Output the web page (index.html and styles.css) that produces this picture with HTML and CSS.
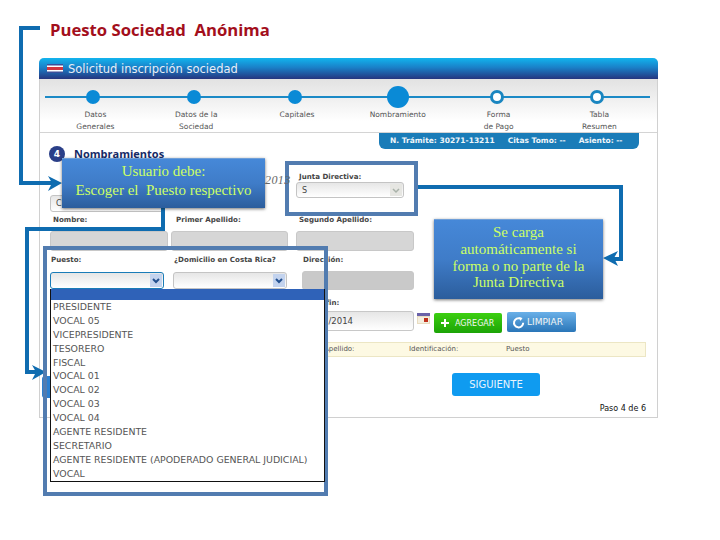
FILE: index.html
```html
<!DOCTYPE html>
<html lang="es">
<head>
<meta charset="utf-8">
<title>Puesto Sociedad Anónima</title>
<link rel="stylesheet" href="styles.css">
</head>
<body>
<main class="stage">
  <h1 class="slide-title">Puesto Sociedad&nbsp; Anónima</h1>
  <section class="card">
    <header class="card-head">
      <svg class="flag" width="16" height="9" viewBox="0 0 16 9"><rect width="16" height="9" fill="#fff"/><rect width="16" height="1.5" fill="#3b4f9a"/><rect y="3" width="16" height="3" fill="#d2353f"/><rect y="7.5" width="16" height="1.5" fill="#3b4f9a"/></svg>
      <span>Solicitud inscripción sociedad</span>
    </header>
    <div class="stepper">
      <div class="step"><i class="dot"></i><span>Datos<br>Generales</span></div>
      <div class="step"><i class="dot"></i><span>Datos de la<br>Sociedad</span></div>
      <div class="step"><i class="dot"></i><span>Capitales</span></div>
      <div class="step"><i class="dot current"></i><span>Nombramiento</span></div>
      <div class="step"><i class="dot todo"></i><span>Forma<br>de Pago</span></div>
      <div class="step"><i class="dot todo"></i><span>Tabla<br>Resumen</span></div>
    </div>
    <div class="tramite"><span>N. Trámite: 30271-13211</span><span>Citas Tomo: --</span><span>Asiento: --</span></div>
    <div class="section-head"><b class="num">4</b><h2>Nombramientos</h2></div>
    <div class="form">
      <div class="cell row-a"><div class="select plain"><span>C</span></div></div>
      <div class="cell row-a"><span class="date-text">2013</span></div>
      <div class="cell row-a cell-junta"><label>Junta Directiva:</label><div class="select plain junta"><span>S</span><i class="arrow"><svg width="10" height="7" viewBox="0 0 10 7"><path d="M2 2l3 3 3-3" fill="none" stroke="#a9b2a9" stroke-width="1.5"/></svg></i></div></div>
      <div class="cell row-a"></div>

      <div class="cell row-b"><label>Nombre:</label><div class="field"></div></div>
      <div class="cell row-b"><label>Primer Apellido:</label><div class="field mid"></div></div>
      <div class="cell row-b"><label>Segundo Apellido:</label><div class="field"></div></div>
      <div class="cell row-b"></div>

      <div class="cell row-c"><label class="flush">Puesto:</label><div class="select active"><i class="arrow blue"><svg width="10" height="7" viewBox="0 0 10 7"><path d="M2 2l3 3 3-3" fill="none" stroke="#23508f" stroke-width="2"/></svg></i></div></div>
      <div class="cell row-c"><label class="flush">¿Domicilio en Costa Rica?</label><div class="select"><i class="arrow blue"><svg width="10" height="7" viewBox="0 0 10 7"><path d="M2 2l3 3 3-3" fill="none" stroke="#23508f" stroke-width="2"/></svg></i></div></div>
      <div class="cell row-c cell-dir"><label class="flush">Dirección:</label><div class="field dark"></div></div>
      <div class="cell row-c"></div>

      <div class="cell row-d"></div>
      <div class="cell row-d"></div>
      <div class="cell row-d cell-date">
        <label>Fecha fin:</label>
        <div class="date-input">01/01/2014</div>
        <svg class="cal" width="13" height="11" viewBox="0 0 13 11"><rect width="13" height="11" fill="#e8dcc0"/><rect width="13" height="3" fill="#6a62a8"/><rect x="1" y="4" width="11" height="6" fill="#f4efe0"/><rect x="7" y="5" width="4" height="4" fill="#c0301c"/></svg>
      </div>
      <div class="cell row-d actions">
        <div class="btn green"><svg width="10" height="10" viewBox="0 0 10 10"><path d="M5 1v8M1 5h8" stroke="#fff" stroke-width="2"/></svg><span>AGREGAR</span></div>
        <div class="btn azure"><svg width="13" height="13" viewBox="0 0 13 13"><path d="M8.5 2.6a4.6 4.6 0 1 0 2.7 4.2" fill="none" stroke="#fff" stroke-width="2"/><path d="M7 1l3.5 1-2 3z" fill="#fff"/></svg><span>LIMPIAR</span></div>
      </div>
    </div>
    <div class="table-head"><span class="th-c">Segundo Apellido:</span><span class="th-d">Identificación:</span><span class="th-e">Puesto</span></div>
    <div class="next-row"><div class="next">SIGUIENTE</div></div>
    <p class="pager">Paso 4 de 6</p>
  </section>

  <svg class="wires" width="720" height="540" viewBox="0 0 720 540">
    <g fill="none" stroke="#0f6cb0" stroke-width="4">
      <path d="M40 28H21V183H54"/>
      <path d="M163 208V229H27V372H38"/>
      <path d="M418 187H621V259H612"/>
    </g>
    <g fill="#0f6cb0">
      <path d="M48 176L62 183 48 191 52 183z"/>
      <path d="M32 365L46 372 32 380 36 372z"/>
      <path d="M618 251L603 258 618 266 614 258z"/>
    </g>
  </svg>

  <div class="frame frame-junta"></div>
  <i class="tab"></i>
  <div class="frame frame-puesto"></div>
  <ul class="dropdown">
    <li class="selected">&nbsp;</li>
    <li>PRESIDENTE</li>
    <li>VOCAL 05</li>
    <li>VICEPRESIDENTE</li>
    <li>TESORERO</li>
    <li>FISCAL</li>
    <li>VOCAL 01</li>
    <li>VOCAL 02</li>
    <li>VOCAL 03</li>
    <li>VOCAL 04</li>
    <li>AGENTE RESIDENTE</li>
    <li>SECRETARIO</li>
    <li>AGENTE RESIDENTE (APODERADO GENERAL JUDICIAL)</li>
    <li>VOCAL</li>
  </ul>

  <aside class="note note-user"><p>Usuario debe:</p><p>Escoger el&nbsp; Puesto respectivo</p></aside>
  <aside class="note note-auto"><p>Se carga automáticamente si forma o no parte de la Junta Directiva</p></aside>
</main>
</body>
</html>
```

FILE: styles.css
```css
* { box-sizing: border-box; }
html, body { margin: 0; padding: 0; background: #fff; }
.stage {
  position: relative;
  width: 720px;
  height: 540px;
  overflow: hidden;
  padding: 20px 0 0 39px;
  font-family: "DejaVu Sans", sans-serif;
}
.slide-title {
  margin: 0 0 0 11px;
  height: 38px;
  font: bold 16.7px/20px "Open Sans", sans-serif;
  color: #a30f1c;
}
.card {
  width: 619px;
  height: 360px;
  border: 1px solid #d0d0d0;
  border-top: 0;
  border-radius: 5px 5px 0 0;
  background: #fff;
}
.card-head {
  display: flex;
  align-items: center;
  gap: 5px;
  height: 21px;
  margin: 0 -1px;
  padding-left: 8px;
  border-radius: 5px 5px 0 0;
  background: linear-gradient(#12b4ee, #1a80c8 45%, #25357f);
  color: #e8eef6;
  font-size: 11.5px;
}
.flag { display: block; }
.stepper {
  position: relative;
  display: grid;
  grid-template-columns: repeat(6, 100.8px);
  height: 54px;
  padding: 0 0 0 3px;
  overflow: hidden;
  background: linear-gradient(#e2e2e2, #fff 80%);
  border-bottom: 1px solid #d4d4d4;
}
.stepper::before {
  content: "";
  position: absolute;
  left: 5px;
  right: 7px;
  top: 17px;
  height: 2px;
  background: #1c8ac6;
}
.step {
  position: relative;
  display: flex;
  flex-direction: column;
  align-items: center;
  font-size: 7.5px;
  line-height: 11.5px;
  color: #555;
  text-align: center;
  padding-top: 11px;
}
.step span { margin: 5px 0 0 4px; }
.dot {
  display: block;
  width: 14px;
  height: 14px;
  border-radius: 50%;
  background: #0a8ad6;
}
.dot.current {
  width: 22px;
  height: 22px;
  margin: -4px 0 -4px 4px;
}
.dot.todo {
  background: #fff;
  border: 3px solid #1a86c0;
}
.tramite {
  display: flex;
  gap: 13px;
  width: 260px;
  height: 16px;
  margin-left: 339px;
  padding-left: 11px;
  border-radius: 0 0 6px 6px;
  background: #1a7cb8;
  color: #f0f6fa;
  font-size: 7.5px;
  font-weight: bold;
  line-height: 16px;
  white-space: nowrap;
}
.section-head {
  display: flex;
  align-items: flex-start;
  gap: 9px;
  height: 19px;
  margin-left: 9px;
  margin-top: -3px;
}
.num {
  width: 16px;
  height: 16px;
  border-radius: 50%;
  background: #2a3f88;
  color: #fff;
  font-size: 9px;
  line-height: 16px;
  text-align: center;
}
.section-head h2 {
  margin: 0;
  font: bold 11px/15px "Open Sans", sans-serif;
  color: #162a66;
}
.form {
  display: grid;
  grid-template-columns: 123px 123px 128px 1fr;
  grid-template-rows: 47px 39px 43px 47px;
  padding-left: 10px;
}
.cell { position: relative; min-width: 0; }
label {
  display: block;
  font-size: 7.1px;
  font-weight: bold;
  line-height: 11px;
  color: #454545;
  padding-left: 3px;
  white-space: nowrap;
}
label.flush { padding-left: 0; margin-left: 1px; }
.row-a { padding-top: 30px; }
.row-a.cell-junta { padding-top: 6px; }
.row-b { padding-top: 2px; }
.row-c { padding-top: 3px; }
.row-d { padding-top: 3px; }
.field {
  width: 118px;
  height: 20px;
  margin-top: 6px;
  border: 1px solid #c8c8c8;
  border-radius: 3px;
  background: #d6d6d6;
}
.field.mid { width: 117px; margin-left: -2px; }
.field.dark { background: #c9c9c9; margin-top: 6px; width: 112px; height: 19px; }
.cell-dir { padding-left: 6px; }
.select {
  position: relative;
  width: 114px;
  height: 17px;
  margin-top: 7px;
  border: 1px solid #c4c4c4;
  border-radius: 3px;
  background: linear-gradient(#e6e6e6, #fff);
  font-size: 8px;
  line-height: 15px;
  padding-left: 5px;
  color: #444;
}
.select.plain { margin-top: 0; }
.select.active { border: 1px solid #1a7cb8; }
.select.junta { width: 108px; margin-top: 0; height: 16px; }
.arrow {
  position: absolute;
  right: 1px;
  top: 1px;
  bottom: 1px;
  width: 12px;
  display: flex;
  align-items: center;
  justify-content: center;
  background: #e6e6e2;
}
.arrow.blue { background: #c3d3ee; }
.date-text {
  position: relative;
  z-index: 1;
  display: block;
  margin-left: 92px;
  margin-top: -22px;
  font: italic 12px "Liberation Serif", serif;
  letter-spacing: .4px;
  color: #666;
}
.cell-date { padding-left: 4px; }
.cell-date label { padding-left: 0; }
.date-input {
  width: 114px;
  height: 20px;
  margin-top: 3px;
  border: 1px solid #c8c8c8;
  border-radius: 3px;
  background: linear-gradient(#e6e6e6, #fff);
  font-size: 8.5px;
  line-height: 18px;
  padding-left: 3px;
  color: #444;
}
.cal { position: absolute; left: 121px; top: 19px; }
.actions {
  display: flex;
  align-items: flex-start;
  gap: 5px;
  padding-top: 19px;
  padding-left: 10px;
}
.btn {
  display: flex;
  align-items: center;
  gap: 5px;
  width: 68px;
  height: 20px;
  padding-left: 6px;
  border-radius: 2px;
  color: #f2f6f4;
  font-size: 8px;
}
.btn.green { background: linear-gradient(#3ccf10, #1ca406); }
.btn.azure { width: 69px; margin-top: -1px; padding-left: 5px; gap: 2px; font-size: 9px; background: linear-gradient(#6ab0e8, #2a76b8); }
.table-head {
  display: flex;
  width: 596px;
  height: 15px;
  margin: 1px 0 0 10px;
  padding-left: 240px;
  border: 1px solid #ece6c4;
  background: #fdf9e3;
  color: #555;
  font-size: 7px;
  line-height: 13px;
}
.th-c { width: 118px; }
.th-d { width: 97px; }
.next-row { display: flex; margin: 16px 0 0 412px; }
.next {
  width: 88px;
  height: 23px;
  border-radius: 3px;
  background: #0f9bf0;
  color: #e8f4fc;
  font-size: 10px;
  line-height: 23px;
  text-align: center;
}
.pager {
  margin: 7px 11px 0 0;
  text-align: right;
  font: 8px/12px "DejaVu Sans", sans-serif;
  color: #111;
}
.wires { position: absolute; left: 0; top: 0; }
.frame { position: absolute; border: 4px solid #527cb0; }
.frame-junta { left: 285px; top: 161px; width: 133px; height: 55px; }
.frame-puesto { left: 43px; top: 246px; width: 285px; height: 250px; }
.tab {
  position: absolute;
  left: 42px;
  top: 376px;
  width: 8px;
  height: 22px;
  border-radius: 3px 0 0 3px;
  background: #2b7fd0;
}
.dropdown {
  position: absolute;
  left: 50px;
  top: 289px;
  width: 275px;
  height: 193px;
  margin: 0;
  padding: 0;
  list-style: none;
  background: #fff;
  border: 1px solid #111;
  border-top: 0;
  font-size: 9.4px;
  line-height: 13.9px;
  color: #555;
  white-space: nowrap;
}
.dropdown li { padding-left: 2px; height: 13.9px; }
.dropdown .selected { height: 11px; background: #2f62b8; }
.note {
  position: absolute;
  display: flex;
  flex-direction: column;
  justify-content: center;
  text-align: center;
  font: 15px/16.7px "Liberation Serif", serif;
  color: #ccff66;
  background: linear-gradient(#4688d8, #3f7cc8 50%, #2b5d9c);
  border-top: 1px solid #6f9fd8;
  box-shadow: 0 1px 3px rgba(0, 0, 0, .55);
}
.note p { margin: 0; }
.note-user { left: 62px; top: 158px; width: 203px; height: 50px; padding-bottom: 6px; line-height: 19px; }
.note-auto { left: 434px; top: 219px; width: 169px; height: 80px; padding: 0 10px 4px; }
```
